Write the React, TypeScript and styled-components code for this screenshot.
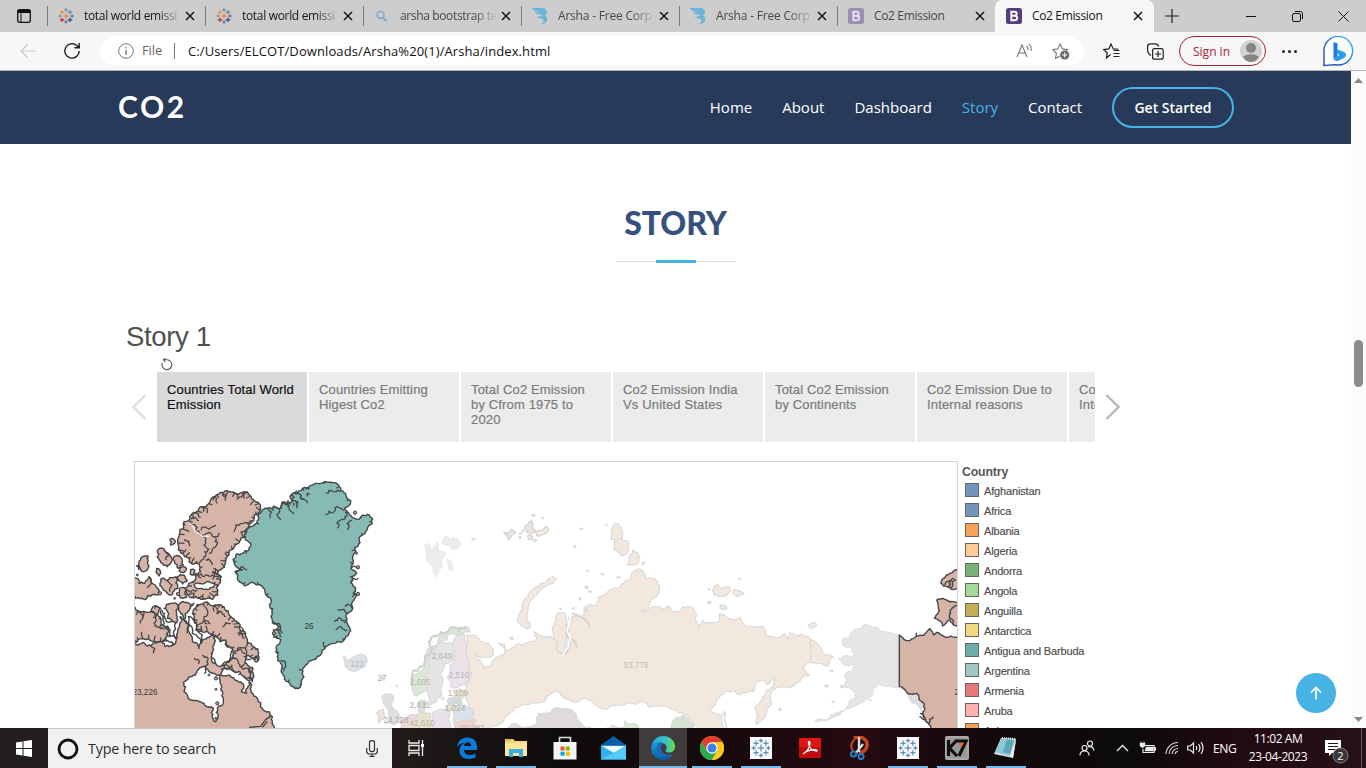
import React from "react";
import styled, { createGlobalStyle, css } from "styled-components";

const GlobalStyle = createGlobalStyle`
  * { box-sizing: border-box; }
  html, body { margin: 0; padding: 0; overflow: hidden; }
  body { font-family: "Open Sans", "Noto Sans", sans-serif; background: #fff; }
  svg { display: block; flex: none; }
`;

const Screen = styled.div`
  width: 1366px;
  height: 768px;
  display: flex;
  flex-direction: column;
  overflow: hidden;
`;

/* ---------- browser tabs ---------- */

const TabStrip = styled.div`
  height: 32px;
  flex: none;
  display: flex;
  background: #cdcdcd;
`;
const TabActions = styled.div`
  width: 47px;
  display: flex;
  align-items: center;
  padding-left: 16px;
`;
const BrowserTab = styled.div<{ $active?: boolean }>`
  width: ${(p) => (p.$active ? 159 : 158)}px;
  display: flex;
  align-items: center;
  padding-left: 11px;
  position: relative;
  ${(p) =>
    p.$active
      ? css`
          background: #f7f7f7;
          border-radius: 7px 7px 0 0;
        `
      : css`
          &::before {
            content: "";
            position: absolute;
            left: 0;
            top: 6px;
            width: 1px;
            height: 20px;
            background: #7c7c7c;
          }
        `}
`;
const TabTitle = styled.span<{ $dim?: boolean; $fade?: boolean; $spacing?: number }>`
  width: 96px;
  margin-left: 10px;
  font-size: 12px;
  line-height: 20px;
  letter-spacing: ${(p) => p.$spacing ?? -0.1}px;
  white-space: nowrap;
  color: ${(p) => (p.$dim ? "#484848" : "#151515")};
  ${(p) => p.$fade && css`mask-image: linear-gradient(90deg, #000 76%, transparent 102%);`}
`;
const TabClose = styled.span`
  margin-left: 5px;
`;
const NewTab = styled.div`
  width: 36px;
  display: flex;
  align-items: center;
  justify-content: center;
`;
const WindowControls = styled.div`
  margin-left: auto;
  display: flex;
  align-items: center;
  gap: 35px;
  padding-right: 17px;
`;

/* ---------- address bar ---------- */

const Toolbar = styled.div`
  height: 39px;
  flex: none;
  display: flex;
  align-items: center;
  background: #f7f7f7;
  border-bottom: 1px solid #b5b5b8;
  padding-left: 20px;
`;
const ReloadSlot = styled.div`
  margin-left: 25px;
`;
const AddressBar = styled.div`
  width: 984px;
  height: 30px;
  margin-left: 19px;
  padding: 0 14px 0 18px;
  display: flex;
  align-items: center;
  border-radius: 15px;
  background: #fff;
  font-size: 13px;
`;
const Scheme = styled.span`
  margin-left: 8px;
  width: 33px;
  height: 16px;
  line-height: 15px;
  color: #666;
  border-right: 1px solid #777;
  letter-spacing: -0.1px;
`;
const Address = styled.span`
  margin-left: 13px;
  color: #111;
  letter-spacing: 0.1px;
`;
const AddressActions = styled.div`
  margin-left: auto;
  display: flex;
  gap: 19px;
`;
const SignIn = styled.div`
  width: 87px;
  height: 30px;
  border: 1px solid #a8242c;
  border-radius: 15px;
  margin-left: 15px;
  padding: 0 3px 0 13px;
  display: flex;
  align-items: center;
  justify-content: space-between;
  color: #a8242c;
  font-size: 12px;
`;
const ToolGroup = styled.div`
  display: flex;
  align-items: center;
  gap: 26px;
  margin-left: 19px;
`;
const Dots = styled.div`
  display: flex;
  gap: 3px;
  margin-left: 16px;
  i { width: 3px; height: 3px; border-radius: 50%; background: #222; }
`;
const BingSlot = styled.div`
  margin-left: 26px;
`;

/* ---------- page ---------- */

const Viewport = styled.div`
  height: 657px;
  flex: none;
  display: flex;
  overflow: hidden;
  position: relative;
`;
const Page = styled.main`
  width: 1351px;
  background: #fff;
  overflow: hidden;
`;
const ScrollTrack = styled.div`
  width: 15px;
  background: #fbfbfb;
  display: flex;
  flex-direction: column;
  align-items: center;
  padding: 7px 0 6px;
`;
const ScrollThumb = styled.div`
  width: 9px;
  height: 47px;
  margin-top: 257px;
  margin-bottom: auto;
  border-radius: 5px;
  background: #8c8c8c;
`;
const SiteHeader = styled.header`
  height: 73px;
  padding: 0 117px;
  display: flex;
  align-items: center;
  background: #283a5a;
`;
const Brand = styled.div`
  font-family: Lato, sans-serif;
  font-size: 30px;
  font-weight: 700;
  letter-spacing: 2.6px;
  line-height: 36px;
  color: #fff;
  margin: -4px 0 0 1px;
`;
const Nav = styled.nav`
  margin-left: auto;
  display: flex;
  align-items: center;
  gap: 30px;
  font-size: 15px;
  font-weight: 500;
  line-height: 20px;
`;
const NavLink = styled.span<{ $active?: boolean }>`
  margin-top: -2px;
  color: ${(p) => (p.$active ? "#47b2e4" : "#fff")};
`;
const StartButton = styled.div`
  width: 122px;
  height: 41px;
  border: 2px solid #47b2e4;
  border-radius: 21px;
  color: #fff;
  font-size: 14px;
  font-weight: 600;
  display: flex;
  align-items: center;
  justify-content: center;
`;
const SectionTitle = styled.h2`
  margin: 59px 0 0;
  height: 61px;
  text-align: center;
  font-family: Lato, sans-serif;
  font-size: 32px;
  line-height: 40px;
  font-weight: 900;
  letter-spacing: -0.1px;
  color: #37517e;
`;
const TitleRule = styled.div`
  width: 120px;
  height: 1px;
  margin: -3px auto 0;
  background: #ddd;
  display: flex;
  justify-content: center;
  align-items: center;
  &::after {
    content: "";
    flex: none;
    width: 40px;
    height: 3px;
    background: #47b2e4;
  }
`;
const Workbook = styled.section`
  margin: 57px 0 0 126px;
  width: 1010px;
  font-family: "Liberation Sans", Arial, sans-serif;
`;
const StoryHeading = styled.div`
  height: 39px;
  font-size: 27.6px;
  line-height: 35px;
  letter-spacing: -0.4px;
  color: #505050;
`;
const ResetRow = styled.div`
  height: 14px;
  padding-left: 35px;
`;
const Navigator = styled.div`
  height: 70px;
  display: flex;
  align-items: center;
`;
const Arrow = styled.div<{ $right?: boolean }>`
  width: ${(p) => (p.$right ? 40 : 31)}px;
  padding-left: ${(p) => (p.$right ? 10 : 6)}px;
  flex: none;
`;
const Points = styled.div`
  width: 938px;
  height: 70px;
  display: flex;
  gap: 2px;
  overflow: hidden;
`;
const Point = styled.div<{ $active?: boolean }>`
  width: 150px;
  flex: none;
  padding: 10px 11px 0 10px;
  font-size: 13px;
  line-height: 15px;
  letter-spacing: 0.15px;
  background: ${(p) => (p.$active ? "#dadada" : "#ececec")};
  color: ${(p) => (p.$active ? "#111" : "#7b7b7b")};
  -webkit-text-stroke: 0.2px currentColor;
`;
const Sheet = styled.div`
  display: flex;
  margin: 19px 0 0 8px;
`;
const MapFrame = styled.div`
  width: 824px;
  height: 300px;
  flex: none;
  border: 1px solid #d4d4d4;
`;
const Legend = styled.div`
  padding: 3px 0 0 4px;
  color: #4a4a4a;
`;
const LegendTitle = styled.div`
  font-size: 12.3px;
  line-height: 16px;
  font-weight: 700;
  height: 17px;
  letter-spacing: -0.15px;
  color: #555;
`;
const LegendRow = styled.div`
  display: flex;
  align-items: center;
  height: 20px;
  padding-left: 3px;
  font-size: 11px;
  letter-spacing: -0.16px;
  white-space: nowrap;
  -webkit-text-stroke: 0.15px currentColor;
`;
const Swatch = styled.span<{ $color: string }>`
  width: 14px;
  height: 14px;
  margin: -2px 5px 0 0;
  border: 1px solid #666;
  background: ${(p) => p.$color};
`;
const BackToTop = styled.div`
  position: absolute;
  left: 1296px;
  top: 602px;
  width: 40px;
  height: 40px;
  border-radius: 50%;
  background: #47b2e4;
  display: flex;
  align-items: center;
  justify-content: center;
`;

/* ---------- taskbar ---------- */

const Taskbar = styled.div`
  height: 40px;
  flex: none;
  display: flex;
  color: #fff;
  background: linear-gradient(90deg, #231f1f 0, #211b1a 400px, #0e0b0b 560px, #170a0c 720px, #240a10 860px, #10090b 1010px, #0c0a0b 1130px, #220a12 1240px, #26101a 1366px);
`;
const StartCell = styled.div`
  width: 48px;
  display: flex;
  align-items: center;
  justify-content: center;
`;
const SearchBox = styled.div`
  width: 344px;
  display: flex;
  align-items: center;
  padding: 0 14px 0 9px;
  background: #f1f1f1;
  border-top: 1px solid #c4c4c4;
  color: #2c2c2c;
  font-size: 14.3px;
  letter-spacing: -0.18px;
  span { margin: 0 auto 0 9px; }
`;
const TaskView = styled.div`
  width: 51px;
  padding-left: 16px;
  display: flex;
  align-items: center;
`;
const TaskItem = styled.div<{ $running?: boolean; $active?: boolean }>`
  width: ${(p) => (p.$active ? 48 : 49)}px;
  margin-right: ${(p) => (p.$active ? 1 : 0)}px;
  padding-right: ${(p) => (p.$active ? 0 : 2)}px;
  position: relative;
  display: flex;
  align-items: center;
  justify-content: center;
  background: ${(p) => (p.$active ? "#403c3c" : "transparent")};
  &::after {
    content: "";
    display: ${(p) => (p.$running ? "block" : "none")};
    position: absolute;
    bottom: 0;
    left: ${(p) => (p.$active ? 0 : 4)}px;
    right: ${(p) => (p.$active ? 0 : 5)}px;
    height: 2px;
    background: #76b9ed;
  }
`;
const Tray = styled.div`
  margin-left: auto;
  width: 283px;
  display: flex;
  align-items: center;
  border-right: 1px solid #65565b;
  margin-right: 4px;
`;
const TrayIcon = styled.span<{ $gap: number }>`
  margin-left: ${(p) => p.$gap}px;
`;
const Language = styled.span`
  margin-left: 8px;
  width: 29px;
  font-size: 12px;
  letter-spacing: -0.4px;
`;
const Clock = styled.div`
  width: 60px;
  margin-left: 6px;
  font-size: 12px;
  line-height: 18px;
  letter-spacing: -0.42px;
  text-align: center;
  white-space: nowrap;
  display: flex;
  flex-direction: column;
  align-items: center;
`;
const Notifications = styled.div`
  margin: 8px 0 0 16px;
`;

/* ---------- small icons ---------- */

const CloseIcon = () => (
  <svg width="10" height="10" viewBox="0 0 10 10"><path d="M1 1l8 8M9 1L1 9" stroke="#151515" strokeWidth="1.5" /></svg>
);

const TableauMark = ({ size, mono }: { size: number; mono?: boolean }) => {
  const marks: [number, number, number, string][] = [
    [12, 12, 4.2, "#e8762c"], [12, 3, 2.6, "#5b879b"], [12, 21, 2.6, "#5b6591"], [3, 12, 2.6, "#7199a6"], [21, 12, 2.6, "#5b6591"],
    [6, 6.2, 3.3, "#eb912c"], [18, 6.2, 3.3, "#59879b"], [6, 17.8, 3.3, "#c72035"], [18, 17.8, 3.3, "#1f447e"],
  ];
  return (
    <svg width={size} height={size} viewBox={mono ? "-1.5 -1.5 27 27" : "0 0 24 24"}>
      {mono && <path d="M-1.5-1.500h27v27h-27z" fill="#f6f7f8" />}
      {marks.map(([x, y, r, c], i) => (
        <path key={i} d={`M${x - r} ${y}h${r * 2}M${x} ${y - r}v${r * 2}`} stroke={mono ? "#3c78a8" : c} strokeWidth={mono ? 1.2 : 1.6} />
      ))}
    </svg>
  );
};

const BootstrapMark = ({ dim }: { dim?: boolean }) => (
  <svg width="16" height="16" viewBox="0 0 16 16">
    <rect width="16" height="16" rx="2.5" fill={dim ? "#9b8fb0" : "#563d7c"} />
    <path d="M5.3 3.800h3.200c3 0 3 3.800 0 4 3.700.2 3.500 4.400 0 4.400H5.300zM5.300 7.800h3.200" fill="none" stroke={dim ? "#e6e0ec" : "#fff"} strokeWidth="1.900" />
  </svg>
);

const ArshaMark = () => (
  <svg width="16" height="16" viewBox="0 0 16 16">
    <path d="M0 0h9.500c6 0 7 5.500 3.500 7.500C17 10 15.500 16 9 16c3-1.500 3.500-4.500.5-5.500-2 0-4-.5-5-2 3 .6 6-.2 6-2C7 7 3.500 6 2.500 4c2 .5 5 .7 6.500 0C5 4 1 3 0 0z" fill="#6cb4dc" />
  </svg>
);

const SearchMark = () => (
  <svg width="16" height="16" viewBox="0 0 16 16"><circle cx="6.500" cy="6.800" r="3.400" fill="none" stroke="#83abd0" strokeWidth="1.700" /><path d="M9 9.500l3.300 3.500" stroke="#83abd0" strokeWidth="2" /></svg>
);

/* ---------- map geometry ---------- */

type Pt = [number, number];

const parse = (s: string): Pt[] =>
  s.trim().split(/\s+/).map((p) => p.split(",").map(Number) as Pt);

const random = (start: number) => {
  let seed = start;
  return () => {
    seed = (seed * 16807) % 2147483647;
    return seed / 2147483647 - 0.5;
  };
};

/** Breaks every edge into short irregular steps; an exactly vertical edge is a land border and stays straight. */
const coastPoints = (s: string, amp: number, open: boolean): Pt[] => {
  const pts = parse(s);
  const rnd = random(pts.length * 977 + Math.abs(Math.round(pts[0][0] * 13 + pts[0][1] * 7)) + 1);
  const out: Pt[] = [];
  const split = (a: Pt, b: Pt) => {
    const dx = b[0] - a[0];
    const dy = b[1] - a[1];
    if (Math.hypot(dx, dy) < 7 || (dx === 0 && Math.abs(dy) > 100)) {
      out.push(a);
      return;
    }
    const k = rnd() * amp * 2;
    const m: Pt = [(a[0] + b[0]) / 2 - dy * k, (a[1] + b[1]) / 2 + dx * k];
    split(a, m);
    split(m, b);
  };
  const n = open ? pts.length - 1 : pts.length;
  for (let i = 0; i < n; i++) split(pts[i], pts[(i + 1) % pts.length]);
  if (open) out.push(pts[pts.length - 1]);
  return out;
};

const coast = (s: string, amp = 0.16, open = false): string =>
  "M" + coastPoints(s, amp, open).map((p) => `${p[0].toFixed(1)} ${p[1].toFixed(1)}`).join("L") + (open ? "" : "Z");

/** Short inlets that run from the shore towards the interior. */
const inlets = (s: string, amp: number, every: number, length: number): string => {
  const pts = coastPoints(s, amp, false);
  const rnd = random(pts.length * 331 + 5);
  let area = 0;
  pts.forEach((p, i) => {
    const q = pts[(i + 1) % pts.length];
    area += p[0] * q[1] - q[0] * p[1];
  });
  const side = area > 0 ? 1 : -1;
  let d = "";
  for (let i = 0; i < pts.length; i += every) {
    const a = pts[i];
    const b = pts[(i + 2) % pts.length];
    const len = Math.hypot(b[0] - a[0], b[1] - a[1]) || 1;
    const nx = (-(b[1] - a[1]) / len) * side;
    const ny = ((b[0] - a[0]) / len) * side;
    const l = length * (1 + rnd());
    const j = rnd() * 8;
    d += `M${a[0].toFixed(1)} ${a[1].toFixed(1)}l${(nx * l * 0.5 + j).toFixed(1)} ${(ny * l * 0.5).toFixed(1)}l${(nx * l * 0.5 - j * 0.4).toFixed(1)} ${(ny * l * 0.5 + j * 0.5).toFixed(1)}`;
  }
  return d;
};

const GREENLAND =
  "371,165 385,150 400,145 420,138 440,145 447,125 465,130 475,118 468,110 480,98 500,92 512,82 530,76 550,70 570,66 600,68 615,78 620,92 630,98 638,112 650,122 648,134 632,145 640,155 655,172 675,178 685,166 700,163 716,178 714,192 700,207 690,222 675,235 678,248 662,262 666,275 655,290 658,305 650,325 668,340 655,350 650,368 665,385 658,400 668,405 655,425 655,440 636,465 640,490 650,512 635,530 600,550 575,560 560,585 545,598 525,603 512,620 510,650 500,675 493,686 475,680 465,668 445,640 440,610 430,590 427,560 440,538 420,532 418,510 436,500 415,488 415,450 410,415 390,385 365,374 330,376 310,355 303,335 325,330 303,315 297,298 325,280 345,270 350,250 333,235 338,215 355,200 368,190";
const GREENLAND_FRINGE =
  "440,145 447,125 465,130 475,118 468,110 480,98 500,92 512,82 530,76 530,110 500,125 470,140";

const CANADA = [
  "163,182 175,160 205,140 225,130 235,112 265,98 300,97 325,97 350,108 375,130 378,142 360,165 355,185 340,205 320,235 300,262 285,285 275,310 260,330 235,338 262,350 255,372 248,385 252,405 235,418 200,418 168,412 158,395 165,370 185,355 180,343 200,335 195,312 180,312 165,306 150,285 135,262 132,235 137,210 155,184",
  "178,478 182,445 205,432 240,437 270,440 290,470 315,490 335,520 340,545 374,580 366,606 342,585 335,600 355,622 355,665 320,650 290,635 270,620 290,600 297,572 265,550 240,525 210,517 188,502",
  "-8,440 10,452 50,455 65,437 80,445 75,470 82,495 105,515 95,540 60,545 -8,542",
  "-8,350 15,370 32,370 45,350 58,372 75,390 72,405 40,408 35,418 5,415 -8,400",
  "80,358 100,362 110,352 128,352 130,385 108,405 88,390",
  "90,445 112,430 132,436 130,470 125,490 100,475",
  "137,432 160,427 180,430 165,452 150,478 137,455",
  "70,272 90,266 105,282 113,305 100,320 80,308", "120,290 140,292 148,315 132,325",
  "20,300 42,288 45,318 30,335 15,322", "108,238 120,238 122,250 110,255", "68,325 80,340 75,348",
  "138,322 158,326 152,336 135,333", "170,328 183,332 178,345 168,342", "130,350 150,345 160,362 145,372",
  "135,385 155,388 158,412 138,412", "8,318 16,318 14,328",
];
const MAINLAND =
  "-10,553 12,556 22,550 40,558 60,548 85,545 100,555 125,550 130,520 138,470 150,480 165,515 175,540 195,565 205,540 235,525 248,545 232,580 240,610 270,615 290,640 318,656 350,668 352,698 370,715 385,745 405,755 415,770 412,830 -10,830";
const BAYS = [
  "180,375 200,370 243,368 240,380 208,388 188,386",
  "240,530 258,545 275,540 282,562 297,568 290,590 278,605 262,618 245,610 232,592 236,560",
  "192,630 215,620 240,640 258,645 260,690 268,715 265,735 250,745 253,768 245,785 235,770 238,745 215,738 190,722 163,716 150,695 148,668 165,650 185,645",
  "270,625 300,635 330,650 350,660 345,668 338,700 322,695 328,672 300,655 262,645",
  "82,450 92,475 125,490 118,520 130,535 105,530 108,510 88,495", "85,548 105,545 120,552 105,560",
  "163,470 178,480 185,510 205,525 202,550 190,530 175,520",
];
const FJORDS = [
  "165,188 185,212 205,228 235,228 258,220", "205,228 210,255 225,268 210,290 195,308", "205,140 220,160", "235,112 250,130",
  "265,98 272,122", "300,97 308,118", "325,97 312,115", "180,160 200,172", "172,178 195,182", "200,210 225,208 245,195",
  "245,235 240,262 225,280", "215,300 235,315", "300,215 325,190 355,182", "150,240 168,258",
  "190,345 210,350 235,345 260,352", "170,400 190,392", "215,440 210,470 220,492", "240,437 248,460 275,470", "190,500 230,492",
  "265,500 290,490", "300,500 325,515", "310,520 332,535", "300,575 335,580", "290,595 318,620 350,640", "310,570 350,600",
  "10,452 20,490", "50,455 60,490 88,500", "205,585 222,610 210,640", "180,595 195,612", "150,480 160,520", "50,555 58,580",
  "100,360 108,395", "45,350 40,385",
  "400,145 408,175", "425,140 432,170 440,180", "447,128 465,145 480,162", "480,98 500,115 520,130", "470,120 490,145",
  "575,100 600,95 620,95", "575,165 600,155 632,150", "612,205 620,180 640,155", "640,210 655,180",
  "652,325 672,322", "650,368 672,355", "655,410 672,402", "610,450 640,462", "600,485 635,480",
  "605,510 640,510", "415,488 440,505 442,530", "425,510 445,520", "440,600 450,635", "303,335 340,330",
  "575,560 570,545", "632,438 655,445", "90,270 98,300",
];
const SPECKS: Pt[] = [[663, 158], [668, 280], [672, 322], [225, 645], [246, 655], [246, 688], [250, 730], [122, 415], [132, 402], [462, 125], [672, 402], [265, 628], [78, 400], [10, 345], [420, 520], [245, 775]];

interface Land { d: string; fill: string; edge?: string }
const EURASIA: Land[] = [
  { fill: "#f3e8de", d: "350,405 375,405 400,425 428,445 430,465 405,472 378,462 388,480 400,505 422,495 435,475 465,460 447,430 462,432 465,450 500,432 540,425 562,415 552,395 570,405 600,410 625,430 622,455 640,466 660,440 655,400 665,350 690,350 702,345 702,322 740,315 745,290 780,268 820,250 840,240 845,220 862,207 880,215 885,235 915,237 928,255 926,280 900,310 875,335 920,320 960,320 965,332 992,333 998,320 1030,325 1035,360 1045,382 1058,360 1065,368 1105,365 1110,340 1170,352 1190,380 1235,378 1250,405 1290,410 1302,400 1315,418 1320,398 1360,405 1382,418 1415,450 1450,470 1435,498 1410,490 1380,485 1360,505 1378,525 1340,550 1290,562 1268,570 1265,610 1250,640 1220,675 1215,620 1240,590 1270,560 1275,530 1250,555 1235,540 1210,575 1130,573 1100,600 1080,628 1115,650 1115,720 340,720 370,640 350,600 342,580 350,550 365,520 355,480 345,440" },
  { fill: "#f3e8de", d: "502,360 515,330 520,305 540,275 560,260 590,245 610,230 620,238 605,252 570,270 550,295 535,320 530,355 540,385 518,380" },
  { fill: "#f3e8de", d: "608,400 612,370 622,340 645,340 650,370 648,430 640,460 625,455 622,425" },
  { fill: "#f3e8de", d: "802,70 818,98 815,118 782,118 785,85" },
  { fill: "#f3e8de", d: "795,120 832,122 832,160 818,168 795,150" },
  { fill: "#f3e8de", d: "848,150 870,170 865,188 832,195 840,165" },
  { fill: "#f3e8de", d: "1092,260 1105,255 1120,265 1135,260 1142,272 1125,290 1092,285" },
  { fill: "#f3e8de", d: "1150,270 1182,282 1165,290 1150,282" },
  { fill: "#f3e8de", d: "1112,315 1130,320 1130,328 1110,325" },
  { fill: "#f3e8de", d: "1375,375 1395,368 1400,378 1380,384" },
  { fill: "#ececec", edge: "#e9e9e9", d: "223,135 238,133 248,150 262,126 266,152 288,162 275,180 278,200 262,232 248,205 240,190 228,178" },
  { fill: "#ececec", edge: "#e9e9e9", d: "278,122 290,108 303,118 310,112 330,125 325,142 308,150 298,138 280,135" },
  { fill: "#ececec", edge: "#e9e9e9", d: "292,178 308,195 310,210 296,205" },
  { fill: "#ebe4dc", edge: "#d3d1cf", d: "460,98 472,100 485,88 498,98 485,108 475,120 470,106" },
  { fill: "#ebe4dc", edge: "#d3d1cf", d: "525,80 538,72 545,60 550,85 556,96 540,100 530,98" },
  { fill: "#f3e8de", edge: "#d3d1cf", d: "556,96 575,92 590,78 596,90 578,104 560,108" },
  { fill: "#ebe4dc", edge: "#d3d1cf", d: "532,108 545,106 548,120 534,120" },
  { fill: "#dbe1e5", d: "-20,468 -10,478 20,466 45,466 53,482 40,502 10,514 -10,505 -15,490" },
  { fill: "#dbe8d8", d: "183,545 200,520 225,495 245,440 270,410 310,385 350,380 360,395 330,410 300,400 270,430 255,450 240,490 235,530 232,570 200,588 187,570" },
  { fill: "#e5e4e2", d: "255,445 275,425 308,430 312,480 288,490 270,520 275,560 260,605 240,615 230,570 235,510" },
  { fill: "#ebe2ea", d: "320,405 345,405 350,430 352,470 362,520 345,555 300,560 293,530 300,510 315,480 308,430" },
  { fill: "#e2dddf", d: "95,592 120,580 132,590 125,610 145,640 150,665 108,672 118,650 108,620" },
  { fill: "#ece5d2", d: "80,640 100,628 105,650 85,668" },
  { fill: "#e2dddf", d: "203,608 225,600 222,635 205,635" },
  { fill: "#e8e1cb", d: "195,645 240,640 252,700 195,700" },
  { fill: "#ebdad8", d: "165,655 195,645 195,700 150,690" },
  { fill: "#eae0ea", d: "245,640 300,635 315,700 255,700" },
  { fill: "#d9e4ea", d: "310,640 345,615 368,645 350,665 310,665" },
  { fill: "#cfd9e0", d: "293,600 312,592 335,598 340,618 295,615" },
  { fill: "#e9e2c8", d: "288,618 320,618 318,635 290,632" },
  { fill: "#e9e2c8", d: "310,572 345,572 340,592 315,592" },
  { fill: "#edd2d0", d: "312,668 378,658 395,700 312,700" },
  { fill: "#dedadd", d: "462,700 500,670 560,675 565,640 600,638 630,625 675,640 690,665 730,690 740,710" },
  { fill: "#d5e2d5", d: "965,700 975,655 1000,645 1015,655 1030,700" },
  { fill: "#dbe8d8", d: "760,700 790,675 820,684 825,662 860,675 880,700" },
  { fill: "#e6e6e6", edge: "#dedede", d: "1478,420 1500,410 1515,388 1545,373 1570,382 1630,400 1648,405 1648,562 1610,560 1585,552 1560,590 1510,620 1470,645 1395,665 1460,638 1520,590 1515,578 1478,560 1492,540 1485,520 1505,515 1515,495 1480,495 1465,475 1515,465 1505,445 1478,432" },
  { fill: "#dedede", edge: "#dadada", d: "1652,565 1675,580 1695,578 1722,615 1715,635 1690,610" },
];
const GREY_SPECKS: Pt[] = [[550, 46], [578, 54], [510, 113], [694, 87], [674, 140], [712, 212], [710, 262], [770, 76], [757, 222], [805, 232], [880, 190], [1078, 268], [1078, 308], [1168, 236], [690, 296], [370, 117], [98, 535], [140, 558], [485, 415], [632, 327], [1290, 628], [1445, 512], [1475, 560], [1560, 600], [1430, 558], [1450, 605], [278, 595], [720, 275], [710, 330], [670, 325], [555, 122], [1330, 556], [520, 92], [540, 66], [512, 100]];
const EAST_CANADA = [
  "1648,405 1662,418 1680,422 1700,408 1722,405 1740,386 1752,405 1765,398 1790,412 1840,418 1840,720 1750,700 1735,670 1718,640 1722,610 1700,580 1675,582 1660,565 1648,560",
  "1760,300 1785,298 1800,306 1840,300 1840,380 1810,375 1800,360 1778,378 1753,355 1765,325",
  "1773,250 1790,225 1830,208 1840,275 1805,268 1790,260",
];
const EAST_FJORDS = ["1785,255 1800,240", "1795,260 1812,235", "1805,265 1818,240", "1800,340 1822,315", "1810,370 1800,335", "1710,640 1725,660 1708,650", "1735,670 1750,650", "1700,408 1700,398"];
const LABELS: [number, number, string, string][] = [
  [309, 629, "26", "#333"], [145, 695, "23,226", "#3c3734"], [357, 667, "122", "#b8bdc2"], [382, 681, "27", "#aaa"],
  [442, 659, "2,649", "#b5b5b3"], [459, 678, "2,510", "#bab2b9"], [420, 685, "1,605", "#b0bbad"], [458, 696, "1,109", "#b8b4a5"],
  [420, 708, "2,431", "#b0abad"], [455, 711, "1,024", "#a9afb3"], [396, 723, "24,728", "#aaa7a8"], [422, 726, "42,610", "#b8b19e"],
  [472, 731, "20,282", "#c1aaa8"], [636, 668, "83,778", "#c5beb7"], [967, 695, "23,226", "#3c3734"],
];

const WorldMap = () => (
  <svg width="822" height="298" viewBox="135 462 822 298">
    <g transform="translate(350 500) scale(.33333)" strokeLinejoin="round">
      {EURASIA.map((l, i) => <path key={i} d={coast(l.d, 0.19)} fill={l.fill} stroke={l.edge ?? "#d8d8d8"} strokeWidth="3.2" />)}
      <path d={coast("665,340 690,350 710,360 720,382", 0.1, true) + coast("655,415 675,425 682,445", 0.1, true)} fill="none" stroke="#d4d5d6" strokeWidth="6" />
      <path d={coast("649,345 652,390 660,420 652,445 638,466", 0.1, true)} fill="none" stroke="#d4d5d6" strokeWidth="10" />
      <path d={coast("649,340 652,390 660,420 652,445 638,470", 0.1, true)} fill="none" stroke="#fff" strokeWidth="5" />
      <path d="M1382 418v65" stroke="#dad5d0" strokeWidth="3" />
      <path d={coast("238,440 265,405 300,385 345,378", 0.35, true) + coast("185,550 215,500 245,440", 0.3, true)} fill="none" stroke="#cdd1cc" strokeWidth="6" />
      {GREY_SPECKS.map(([x, y], i) => <ellipse key={i} cx={x} cy={y} rx={i % 3 ? 4 : 6} ry={i % 2 ? 2.5 : 4} fill="#e1e0de" stroke="#d3d3d3" strokeWidth="2" />)}
      <path d={coast("1115,650 1125,635 1130,690", 0.1, true)} fill="none" stroke="#d5d5d5" strokeWidth="4" />
      <g fill="#d6b4a7" stroke="#454648" strokeWidth="4.200">
        {EAST_CANADA.map((d, i) => <path key={i} d={coast(d, 0.18)} />)}
        {EAST_FJORDS.map((d, i) => <path key={i} d={coast(d, 0.3, true)} fill="none" />)}
      </g>
    </g>
    <g transform="translate(134 460) scale(.33333)" stroke="#454648" strokeWidth="4.200" strokeLinejoin="round">
      <g fill="#d6b4a7">
        <path d={coast(MAINLAND, 0.24)} />
        {CANADA.map((d, i) => <path key={i} d={coast(d, 0.26)} />)}
      </g>
      <g fill="#fff">{BAYS.map((d, i) => <path key={i} d={coast(d, 0.24)} />)}</g>
      <path d={coast(GREENLAND, 0.22)} fill="#86bbb5" />
      <g fill="none" strokeWidth="3.800">
        {CANADA.slice(0, 3).map((d, i) => <path key={i} d={inlets(d, 0.26, 4, 13)} />)}
        <path d={inlets(GREENLAND, 0.22, 11, 7)} />
        <path d={inlets(GREENLAND_FRINGE, 0.3, 4, 9)} />
        {FJORDS.map((d, i) => <path key={i} d={coast(d, 0.34, true)} />)}
      </g>
      <path d={coast("165,188 185,215 205,229 225,229", 0.1, true)} fill="none" stroke="#fff" strokeWidth="3.500" />
      {SPECKS.map(([x, y], i) => <circle key={i} cx={x} cy={y} r={i % 2 ? 3 : 5} fill="#a69087" strokeWidth="3" />)}
      <path d="M345 802l35-3 15-20 17-12M385 802l15-18" fill="none" />
    </g>
    {LABELS.map(([x, y, t, c], i) => (
      <text key={i} x={x} y={y} fill={c} fontSize="8.2" textAnchor="middle" fontFamily="Liberation Sans, Arial, sans-serif">{t}</text>
    ))}
  </svg>
);

/* ---------- content ---------- */

const browserTabs: { title: string; icon: React.ReactNode; dim?: boolean; fade?: boolean; spacing?: number }[] = [
  { title: "total world emissi", icon: <TableauMark size={16} />, fade: true, spacing: -0.32 },
  { title: "total world emissi", icon: <TableauMark size={16} />, fade: true, spacing: -0.32 },
  { title: "arsha bootstrap te", icon: <SearchMark />, dim: true, fade: true, spacing: -0.36 },
  { title: "Arsha - Free Corp", icon: <ArshaMark />, dim: true, fade: true, spacing: -0.2 },
  { title: "Arsha - Free Corp", icon: <ArshaMark />, dim: true, fade: true, spacing: -0.2 },
  { title: "Co2 Emission", icon: <BootstrapMark dim />, dim: true, spacing: -0.35 },
];

const storyPoints = [
  "Countries Total World Emission", "Countries Emitting Higest Co2", "Total Co2 Emission by Cfrom 1975 to 2020",
  "Co2 Emission India Vs United States", "Total Co2 Emission by Continents", "Co2 Emission Due to Internal reasons", "Co2 Emission Due to International",
];

const legend: [string, string][] = [
  ["Afghanistan", "#7195bb"], ["Africa", "#7195bb"], ["Albania", "#f5a456"], ["Algeria", "#ffcb97"], ["Andorra", "#7ab375"],
  ["Angola", "#a3da98"], ["Anguilla", "#c5ac56"], ["Antarctica", "#f4d880"], ["Antigua and Barbuda", "#6dadaa"],
  ["Argentina", "#9fc9c5"], ["Armenia", "#e77879"], ["Aruba", "#ffb1ae"], ["Asia", "#f5a456"],
];

const EdgeLegacy = () => (
  <svg width="22" height="22" viewBox="0 0 22 22"><path d="M1 10C2 3 7 .6 11.5.6 18 .6 21 5 21 10v3H8c.3 6 8 6 11.5 3.6v4C13 23.500 3.500 22 3.500 14c0-4 2-6.500 5-8C5.500 6 3 7.300 1 10zm7-1h7.300C15.500 4 8.500 4 8 9z" fill="#0e7ad8" /></svg>
);
const Folder = () => (
  <svg width="22" height="20" viewBox="0 0 22 20"><path d="M0 1h8l2 2h12v15H0z" fill="#f7d774" /><path d="M0 5h22v13H0z" fill="#fde69a" /><path d="M1 2h5" stroke="#d5a12d" /><path d="M4 19v-8h14v8h-4v-4H8v4z" fill="#3cabe0" /></svg>
);
const Store = () => (
  <svg width="24" height="24" viewBox="0 0 24 24"><path d="M6.500 7V1.500h11V7" fill="none" stroke="#ddd" strokeWidth="1.600" /><path d="M.5 6h23v17.500H.5z" fill="#f4f4f4" /><path d="M7.500 10.500h4v4h-4z" fill="#f05423" /><path d="M12.700 10.500h4v4h-4z" fill="#7fba00" /><path d="M7.500 15.700h4v4h-4z" fill="#00a4ef" /><path d="M12.700 15.700h4v4h-4z" fill="#ffb900" /></svg>
);
const Mail = () => (
  <svg width="25" height="24" viewBox="0 0 25 24"><path d="M0 9L12.500 0 25 9v4H0z" fill="#0d5ca8" /><path d="M0 9.500h25v14H0z" fill="#2fb1ef" /><path d="M1 10h23l-11 7z" fill="#f1f7fb" /><path d="M0 23.500L25 10v13.500z" fill="#56c8fa" /></svg>
);
const EdgeNew = () => (
  <svg width="24" height="24" viewBox="0 0 24 24">
    <defs><linearGradient id="edgeTop" x1="0" x2="1"><stop stopColor="#2ba6e1" /><stop offset=".6" stopColor="#35c1c4" /><stop offset="1" stopColor="#6fdb4c" /></linearGradient><linearGradient id="edgeLow" x1="0" x2="0" y1="0" y2="1"><stop stopColor="#1a9de0" /><stop offset="1" stopColor="#0c59a4" /></linearGradient></defs>
    <path d="M.5 10C2 3 7 0 12 0c7 0 12 5 12 10.500 0 5-4 6.500-7 6-2-.4-3-1-2-2.500 2-4-1-7-5-7S2 8 .5 10z" fill="url(#edgeTop)" />
    <path d="M.1 11C1 7 5 5.500 9 6c-4 2-4 11 3 14 5 2 9-1 10-2-2 4-6 6-10 6C5 24-.5 18 .1 11z" fill="url(#edgeLow)" />
    <path d="M9 6c-5 4-4 11 1 14 5 2.500 10 0 12-2-6 2-12 0-12-6 0-3 1-3.500 2-4.500C11 6.500 10 6 9 6z" fill="#1b68b4" />
  </svg>
);
const Chrome = () => (
  <svg width="24" height="24" viewBox="0 0 24 24"><circle cx="12" cy="12" r="12" fill="#fbc91c" /><path d="M1.600 6A12 12 0 0 1 22.400 6H12L7 15z" fill="#e33b2e" /><path d="M1.600 6A12 12 0 0 0 12 24l5-9H7z" fill="#2da94f" /><path d="M22.400 6A12 12 0 0 1 12 24l5.200-9c1-2 .8-5-1.200-7l-4-2z" fill="#fbc91c" /><circle cx="12" cy="12" r="5.700" fill="#fff" /><circle cx="12" cy="12" r="4.500" fill="#3f7fe8" /></svg>
);
const Acrobat = () => (
  <svg width="22" height="20" viewBox="0 0 22 20"><path d="M0 0h22v20H0z" fill="#c20b0b" /><path d="M0 0h22v9H0z" fill="#df1712" /><path d="M4 16c4-2 7-7 7-11 0-2-2-2-1.500 0 .5 5 4 8 8.500 8 1-2-8-2-13 2" fill="none" stroke="#fff" strokeWidth="1.300" /></svg>
);
const Snip = () => (
  <svg width="20" height="24" viewBox="0 0 20 24"><path d="M5 2c6-3 14 1 13 8-.6 4-4 6-8 7" fill="none" stroke="#c8481c" strokeWidth="3.500" /><path d="M6 3c-4 3-5 8-2 12" fill="none" stroke="#c8481c" strokeWidth="2" /><path d="M10 1v15M14 8L7 17" stroke="#d8dcdf" strokeWidth="2.400" /><circle cx="4.500" cy="18" r="2.600" fill="none" stroke="#267fc5" strokeWidth="2" /><circle cx="12" cy="20.500" r="2.600" fill="none" stroke="#267fc5" strokeWidth="2" /></svg>
);
const K7 = () => (
  <svg width="24" height="24" viewBox="0 0 24 24"><rect width="24" height="24" rx="2" fill="#a9a9a9" /><rect x="2" y="2" width="20" height="20" fill="#999" /><path d="M3.500 4v16M12 4l-7.500 8L12 20M12 5h9l-7 15" fill="none" stroke="#111" strokeWidth="3.200" /><path d="M13 7h6l-3 5z" fill="#e56a24" /></svg>
);
const Notepad = () => (
  <svg width="24" height="22" viewBox="0 0 24 22"><path d="M7 1l15 1-3 19-19-4z" fill="#d8dcdd" /><path d="M8 1l13 1-5 17-15-4z" fill="#8bc8d8" /><path d="M13 2l7 1-4 14-7-2z" fill="#5ba7bd" /><path d="M8 1l13 1" stroke="#eee" strokeWidth="2" strokeDasharray="1 1" /><path d="M16 19l3 2 3-18z" fill="#f2eee5" /></svg>
);

const taskItems: { icon: React.ReactNode; running?: boolean; active?: boolean }[] = [
  { icon: <EdgeLegacy />, running: true }, { icon: <Folder />, running: true }, { icon: <Store /> }, { icon: <Mail /> },
  { icon: <EdgeNew />, running: true, active: true }, { icon: <Chrome />, running: true },
  { icon: <TableauMark size={22} mono />, running: true }, { icon: <Acrobat /> }, { icon: <Snip /> },
  { icon: <TableauMark size={22} mono />, running: true }, { icon: <K7 />, running: true }, { icon: <Notepad />, running: true },
];

export default function App() {
  return (
    <Screen>
      <GlobalStyle />
      <TabStrip>
        <TabActions>
          <svg width="16" height="16" viewBox="0 0 16 16"><rect x="1.700" y="1.700" width="12.600" height="12.600" rx="2" fill="none" stroke="#111" strokeWidth="1.300" /><path d="M1.500 3.500h13" stroke="#111" strokeWidth="3" /><path d="M5 4v10" stroke="#111" /></svg>
        </TabActions>
        {browserTabs.map((t, i) => (
          <BrowserTab key={i}>
            {t.icon}
            <TabTitle $dim={t.dim} $fade={t.fade} $spacing={t.spacing}>{t.title}</TabTitle>
            <TabClose><CloseIcon /></TabClose>
          </BrowserTab>
        ))}
        <BrowserTab $active>
          <BootstrapMark />
          <TabTitle $spacing={-0.35}>Co2 Emission</TabTitle>
          <TabClose><CloseIcon /></TabClose>
        </BrowserTab>
        <NewTab><svg width="14" height="14" viewBox="0 0 14 14"><path d="M7 0v14M0 7h14" stroke="#222" strokeWidth="1.200" /></svg></NewTab>
        <WindowControls>
          <svg width="11" height="11" viewBox="0 0 11 11"><path d="M0 5.500h10" stroke="#111" /></svg>
          <svg width="11" height="11" viewBox="0 0 11 11"><rect x=".5" y="2.500" width="8" height="8" rx="1.500" fill="none" stroke="#111" /><path d="M3 .5h5.500a2 2 0 0 1 2 2V8" fill="none" stroke="#111" /></svg>
          <svg width="11" height="11" viewBox="0 0 11 11"><path d="M.5.5l10 10M10.500.5l-10 10" stroke="#111" /></svg>
        </WindowControls>
      </TabStrip>

      <Toolbar>
        <svg width="18" height="16" viewBox="0 0 18 16"><path d="M16 8H1M7.500 1.500L1 8l6.500 6.500" fill="none" stroke="#c9c9c9" strokeWidth="1.200" /></svg>
        <ReloadSlot>
          <svg width="18" height="18" viewBox="0 0 18 18"><path d="M16.200 9A7.200 7.200 0 1 1 13.500 3.300L16.200 5.500M16.200 1v4.700h-4.700" fill="none" stroke="#1b1b1b" strokeWidth="1.400" /></svg>
        </ReloadSlot>
        <AddressBar>
          <svg width="16" height="16" viewBox="0 0 16 16"><circle cx="8" cy="8" r="7.300" fill="none" stroke="#777" /><path d="M8 7v5M8 4v1.400" stroke="#777" strokeWidth="1.300" /></svg>
          <Scheme>File</Scheme>
          <Address>C:/Users/ELCOT/Downloads/Arsha%20(1)/Arsha/index.html</Address>
          <AddressActions>
            <svg width="17" height="16" viewBox="0 0 17 16"><path d="M1 14L6 2l5 12M2.800 10h6.500M10.500 3q2 2 1.500 4M13 .8q3 3 2 7" fill="none" stroke="#777" strokeWidth="1.100" /></svg>
            <svg width="18" height="17" viewBox="0 0 18 17"><path d="M8 13l-4.500 2.500.9-5.200L.8 6.600l5-.7L8.200 1l2.200 4.900 5.100.7-1.500 1.500" fill="none" stroke="#777" strokeWidth="1.100" /><circle cx="12.700" cy="12" r="4.600" fill="#6b6b6b" /><path d="M12.700 9.500v5M10.200 12h5" stroke="#fff" /></svg>
          </AddressActions>
        </AddressBar>
        <ToolGroup>
          <svg width="18" height="17" viewBox="0 0 18 17"><path d="M7.500 11.500L3.500 15l.7-5.200L.8 6.600l5-.7L8 1l2.200 4.900 5 .3M10.500 7.500h6M10.500 10.500h6M10.500 13.500h6" fill="none" stroke="#222" strokeWidth="1.200" /></svg>
          <svg width="17" height="17" viewBox="0 0 17 17"><path d="M4 12.500C1 11 .6 9 .6 6.500V3.500Q.6.8 3.500.8H8q3 0 3.700 2.700" fill="none" stroke="#222" strokeWidth="1.200" /><rect x="5.600" y="5.600" width="10.600" height="10.600" rx="2" fill="none" stroke="#222" strokeWidth="1.200" /><path d="M11 8v6M8 11h6" stroke="#222" strokeWidth="1.200" /></svg>
        </ToolGroup>
        <SignIn>
          Sign in
          <svg width="22" height="22" viewBox="0 0 22 22"><circle cx="11" cy="11" r="11" fill="#d3d1cf" /><circle cx="11" cy="8" r="5" fill="#888584" /><path d="M3 16.500q8-4.500 16 0-3 5.500-8 5.500t-8-5.500z" fill="#888584" /></svg>
        </SignIn>
        <Dots><i /><i /><i /></Dots>
        <BingSlot>
          <svg width="31" height="31" viewBox="0 0 31 31"><defs><linearGradient id="bing" x1="0" y1="1" x2="1" y2="0"><stop stopColor="#1a3fa8" /><stop offset=".55" stopColor="#2a78dc" /><stop offset="1" stopColor="#2ccdf0" /></linearGradient></defs><path d="M1 29.500V15A14.300 14.300 0 1 1 15.500 29C10 28 5 29.500 1 29.500z" fill="#fff" stroke="url(#bing)" strokeWidth="1.400" /><path d="M10.500 6l4 1.500v13l-4 2.500z" fill="#2478e2" /><path d="M10.500 23l6-4-2-1.500-1.500-4.500 8 3c3 1.500 2.500 4.500 0 6l-6 3c-2 0-4-.5-4.500-2z" fill="#289de9" /></svg>
        </BingSlot>
      </Toolbar>

      <Viewport>
        <Page>
          <SiteHeader>
            <Brand>CO2</Brand>
            <Nav>
              <NavLink>Home</NavLink>
              <NavLink>About</NavLink>
              <NavLink>Dashboard</NavLink>
              <NavLink $active>Story</NavLink>
              <NavLink>Contact</NavLink>
              <StartButton>Get Started</StartButton>
            </Nav>
          </SiteHeader>
          <SectionTitle>STORY</SectionTitle>
          <TitleRule />
          <Workbook>
            <StoryHeading>Story 1</StoryHeading>
            <ResetRow>
              <svg width="13" height="13" viewBox="0 0 13 13"><path d="M1.300 5A4.900 4.900 0 1 0 6 1.800H2.500M4.500 0L2.500 1.800l2 2" fill="none" stroke="#555" strokeWidth="1.100" /></svg>
            </ResetRow>
            <Navigator>
              <Arrow><svg width="15" height="28" viewBox="0 0 15 28"><path d="M13.500 2L1.500 14l12 12" fill="none" stroke="#dedede" strokeWidth="2.400" /></svg></Arrow>
              <Points>
                {storyPoints.map((p, i) => <Point key={i} $active={i === 0}>{p}</Point>)}
              </Points>
              <Arrow $right><svg width="16" height="28" viewBox="0 0 16 28"><path d="M1.500 2l12 12-12 12" fill="none" stroke="#b9b9b9" strokeWidth="2.400" /></svg></Arrow>
            </Navigator>
            <Sheet>
              <MapFrame><WorldMap /></MapFrame>
              <Legend>
                <LegendTitle>Country</LegendTitle>
                {legend.map(([name, color]) => <LegendRow key={name}><Swatch $color={color} />{name}</LegendRow>)}
              </Legend>
            </Sheet>
          </Workbook>
        </Page>
        <ScrollTrack>
          <svg width="9" height="5" viewBox="0 0 9 5"><path d="M0 5l4.500-5L9 5z" fill="#888" /></svg>
          <ScrollThumb />
          <svg width="9" height="5" viewBox="0 0 9 5"><path d="M0 0l4.500 5L9 0z" fill="#888" /></svg>
        </ScrollTrack>
        <BackToTop>
          <svg width="14" height="14" viewBox="0 0 14 14"><path d="M7 13.500V2M2 6.500l5-5 5 5" fill="none" stroke="#fff" strokeWidth="1.700" /></svg>
        </BackToTop>
      </Viewport>

      <Taskbar>
        <StartCell>
          <svg width="16" height="17" viewBox="0 0 16 17"><path d="M0 2.500l6.500-1V8H0zM7.500 1.300L16 0v8H7.500zM0 9h6.500v6.500l-6.500-1zM7.500 9H16v8l-8.500-1.300z" fill="#fff" /></svg>
        </StartCell>
        <SearchBox>
          <svg width="22" height="22" viewBox="0 0 22 22"><circle cx="11" cy="11" r="9" fill="none" stroke="#111" strokeWidth="2.800" /></svg>
          <span>Type here to search</span>
          <svg width="12" height="17" viewBox="0 0 12 17"><rect x="3.500" y=".6" width="5" height="11" rx="2.200" fill="none" stroke="#333" strokeWidth="1.200" /><path d="M.7 8v3.500q0 2.500 3 2.500h4.600q3 0 3-2.500V8M6 14v2.500M3.500 16.400h5" fill="none" stroke="#333" strokeWidth="1.200" /></svg>
        </SearchBox>
        <TaskView>
          <svg width="17" height="16" viewBox="0 0 17 16"><path d="M1 0v3h10V0M1 16v-3h10v3M1 5.500h10v5H1zM14.500 0v16" fill="none" stroke="#eee" strokeWidth="1.300" /><path d="M13 4h3v3h-3z" fill="#fff" /></svg>
        </TaskView>
        {taskItems.map((t, i) => <TaskItem key={i} $running={t.running} $active={t.active}>{t.icon}</TaskItem>)}
        <Tray>
          <svg width="16" height="16" viewBox="0 0 16 16"><g fill="none" stroke="#eee" strokeWidth="1.200"><circle cx="5.500" cy="8" r="2.500" /><path d="M1 15.500q0-4.500 4.500-4.500t4.500 4.500" /><circle cx="11" cy="3.500" r="2.500" /><path d="M9 7q5-1.500 6 3.500" /></g></svg>
          <TrayIcon $gap={21}><svg width="13" height="8" viewBox="0 0 13 8"><path d="M1 7l5.500-5.500L12 7" fill="none" stroke="#eee" strokeWidth="1.300" /></svg></TrayIcon>
          <TrayIcon $gap={10}><svg width="17" height="14" viewBox="0 0 17 14"><path d="M5 4.500h10v7H4V8" fill="none" stroke="#eee" strokeWidth="1.200" /><path d="M7 6h7v4H6zM1 2h5v3L3.500 7 1 5zM2 0v2M5 0v2M15 6.500h2v3h-2z" fill="#eee" stroke="#eee" strokeWidth=".5" /></svg></TrayIcon>
          <TrayIcon $gap={9}><svg width="14" height="14" viewBox="0 0 14 14"><g fill="none" stroke="#ddd" strokeWidth="1.100"><path d="M1 13A12 12 0 0 1 13 1.500M4 13a9 9 0 0 1 9-8.500M7 13a6 6 0 0 1 6-5.500M10 13a3 3 0 0 1 3-2.500" /></g></svg></TrayIcon>
          <TrayIcon $gap={8}><svg width="18" height="14" viewBox="0 0 18 14"><path d="M.7 5h2.500L6.500 2v10L3.200 9H.7zM9 5q1.500 2 0 4M11.500 3q3 4 0 8M14 1.200q4 5.800 0 11.600" fill="none" stroke="#eee" strokeWidth="1.200" /></svg></TrayIcon>
          <Language>ENG</Language>
          <Clock><span>11:02 AM</span><span>23-04-2023</span></Clock>
          <Notifications>
            <svg width="26" height="26" viewBox="0 0 26 26"><path d="M1 1h16v13H8l-3 3v-3H1z" fill="#fff" /><path d="M4 4.500h10M4 7.500h10M4 10.500h7" stroke="#241018" strokeWidth="1.200" /><circle cx="16.500" cy="16.500" r="7.500" fill="#3b3739" stroke="#878184" /><text x="16.500" y="20.700" fontSize="11" fill="#fff" textAnchor="middle" fontFamily="Open Sans, sans-serif">2</text></svg>
          </Notifications>
        </Tray>
      </Taskbar>
    </Screen>
  );
}
